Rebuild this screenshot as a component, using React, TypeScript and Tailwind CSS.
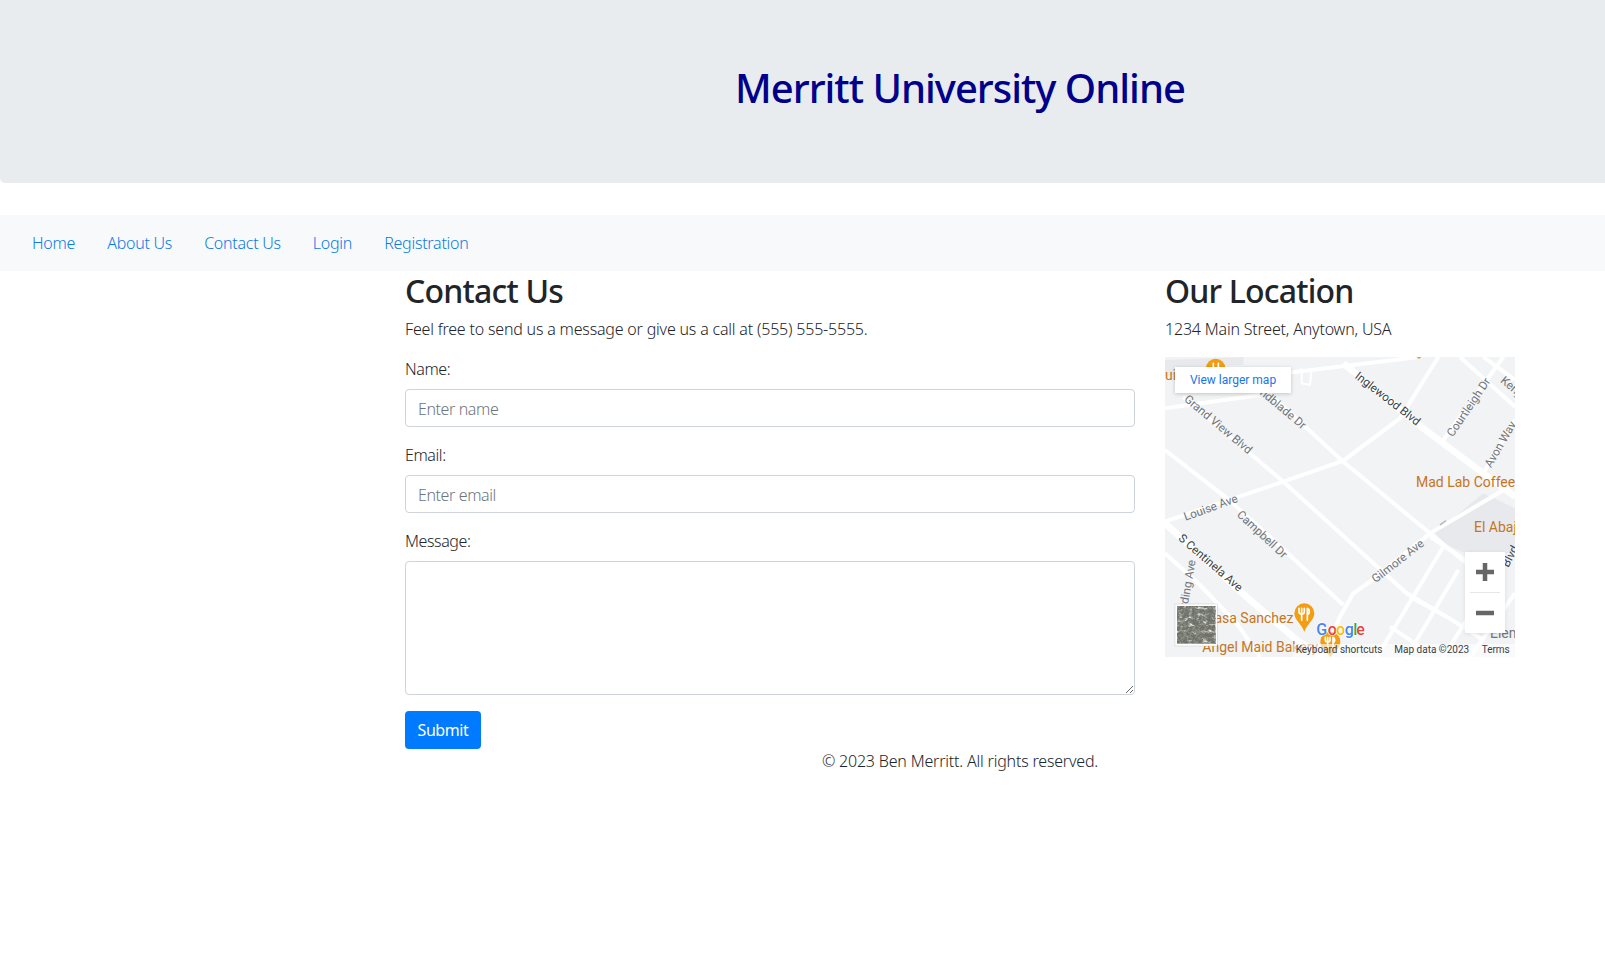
import React from "react";

const sans = "font-['Noto_Sans',sans-serif]";

function MapArt() {
  const minor: string[] = [
    "M45 330 L235 478 L400 628 L580 795",
    "M45 640 L150 735 L260 850 L330 951",
    "M45 205 L330 165",
    "M300 112 L800 52",
    "M300 110 L395 195 L580 365 L840 580 L1005 715",
    "M100 170 L400 425 L770 760 L890 830",
    "M45 545 L400 425 L580 362 L750 235 L865 51",
    "M520 951 L570 830 L610 760 L660 725 L840 580 L1095 430",
    "M680 951 L880 620",
    "M770 951 L925 690",
    "M880 951 L1000 760",
    "M960 951 L1095 760",
    "M780 770 L890 830 L1000 900",
    "M720 860 L840 940",
    "M840 590 L945 660",
    "M930 51 L1095 200 ",
    "M1060 51 L880 300",
    "M1095 240 L1000 400",
    "M1000 51 L1095 120",
  ];
  return (
    <svg viewBox="45 51 1050 900" className="absolute inset-0 h-full w-full">
      <defs>
        <filter id="sat" x="0" y="0" width="100%" height="100%">
          <feTurbulence type="fractalNoise" baseFrequency="0.07 0.1" numOctaves="3" seed="7" />
          <feColorMatrix values="0 0 0 0 0.76  0 0 0 0 0.76  0 0 0 0 0.72  3.5 0 0 0 -1.9" />
        </filter>
        <filter id="sat2" x="0" y="0" width="100%" height="100%">
          <feTurbulence type="fractalNoise" baseFrequency="0.11" numOctaves="3" seed="21" />
          <feColorMatrix values="0 0 0 0 0.26  0 0 0 0 0.28  0 0 0 0 0.25  3.5 0 0 0 -1.5" />
        </filter>
      </defs>
      <rect x="45" y="51" width="1050" height="900" fill="#f1f3f4" />
      <path d="M855 578 L1000 460 L1095 505 L1095 640 L945 640 L880 610 Z" fill="#e8e9ed" />
      <path d="M45 60 L280 51 L280 75 L160 80 L45 110 Z" fill="#e8e9ed" />
      <g fill="none" stroke="#ffffff" strokeWidth="12">
        {minor.map((d) => (
          <path key={d} d={d} />
        ))}
      </g>
      <g fill="none" stroke="#ffffff" strokeWidth="20">
        <path d="M580 70 L800 250 L1000 400 L1095 470" />
        <path d="M45 550 L300 780 L440 900 L520 951" />
      </g>
      <path d="M455 85 L455 130 L480 135 L485 90" fill="none" stroke="#fff" strokeWidth="6" />
      <path d="M870 555 L888 542" stroke="#bdbdbd" strokeWidth="5" fill="none" />

      <g fontFamily="Roboto, sans-serif" fontWeight="400" fontSize="35" fill="#70757a" textAnchor="middle" dominantBaseline="middle">
        <text transform="translate(712 178) rotate(38)" fill="#3c4043">Inglewood Blvd</text>
        <text transform="translate(958 203) rotate(-56)">Courtleigh Dr</text>
        <text transform="translate(1055 118) rotate(40)" textAnchor="start">Kenyon</text>
        <text transform="translate(462 262) rotate(40)" textAnchor="end">Lindblade Dr</text>
        <text transform="translate(203 255) rotate(40)">Grand View Blvd</text>
        <text transform="translate(1015 380) rotate(-60)" textAnchor="start">Avon Way</text>
        <text transform="translate(183 505) rotate(-20)">Louise Ave</text>
        <text transform="translate(335 585) rotate(43)">Campbell Dr</text>
        <text transform="translate(745 665) rotate(-38)">Gilmore Ave</text>
        <text transform="translate(180 670) rotate(41)" fill="#3c4043">S Centinela Ave</text>
        <text transform="translate(128 660) rotate(-80)" textAnchor="end">Harding Ave</text>
        <text transform="translate(1082 650) rotate(-62)" fill="#3c4043">Blvd</text>
      </g>

      <g fontFamily="Roboto, sans-serif" fontWeight="400" fontSize="42" fill="#c5761f">
        <text x="798" y="441">Mad Lab Coffee</text>
        <text x="972" y="576">El Abajeño</text>
        <text x="166" y="849">Casa Sanchez</text>
        <text x="157" y="936">Angel Maid Bakery</text>
        <text x="1020" y="895" fill="#70757a">Elementary</text>
        <text x="45" y="120">uil</text>
      </g>

      <g fill="#f29d12">
        <circle cx="197" cy="85" r="29" />
        <path d="M433 820 a30 30 0 0 1 60 0 c0 22 -22 30 -30 56 c-8 -26 -30 -34 -30 -56 Z" />
        <path d="M511 905 a30 30 0 0 1 60 0 c0 22 -22 30 -30 46 c-8 -16 -30 -24 -30 -46 Z" />
        <path d="M800 51 h14 l-7 6 Z" />
      </g>
      <g fill="none" stroke="#ffffff" strokeWidth="5" strokeLinecap="round">
        <path d="M455 805 v36 M447 805 v11 a8 6 0 0 0 16 0 v-11" />
        <path d="M472 805 v36 M472 805 c8 3 8 16 0 20" />
        <path d="M533 892 v30 M526 892 v9 a7 5 0 0 0 14 0 v-9" />
        <path d="M549 892 v30 M549 892 c7 3 7 14 0 17" />
        <path d="M190 70 v22 M205 70 v22" />
      </g>

      <g fontFamily="Roboto, sans-serif" fontWeight="500" fontSize="48" stroke="#ffffff" strokeWidth="4" style={{ paintOrder: "stroke" }}>
        <text x="499" y="886" fill="#4285f4">G</text>
        <text x="533" y="886" fill="#ea4335">o</text>
        <text x="558" y="886" fill="#fbbc05">o</text>
        <text x="584" y="886" fill="#4285f4">g</text>
        <text x="610" y="886" fill="#34a853">l</text>
        <text x="619" y="886" fill="#ea4335">e</text>
      </g>

      <rect x="430" y="912" width="665" height="39" fill="#ffffff" fillOpacity="0.6" />
      <g fontFamily="Roboto, sans-serif" fontWeight="400" fontSize="30" fill="#3c4043">
        <text x="437" y="940">Keyboard shortcuts</text>
        <text x="733" y="940">Map data ©2023</text>
        <text x="995" y="940">Terms</text>
      </g>

      <rect x="75" y="792" width="127" height="126" fill="#ffffff" stroke="#000" strokeOpacity="0.15" strokeWidth="2" />
      <rect x="81" y="798" width="115" height="113" fill="#6f7068" />
      <rect x="81" y="798" width="115" height="113" filter="url(#sat2)" />
      <rect x="81" y="798" width="115" height="113" filter="url(#sat)" />
    </svg>
  );
}

const field =
  "block h-[38px] w-full rounded border border-[#ced4da] bg-white px-3 pt-[7px] pb-[5px] text-[#495057] tracking-[-0.025em] font-light placeholder:text-[#6c757d]";
const heading = "mb-2 pt-[2px] text-[32px] font-medium leading-[36.4px] tracking-[-0.025em]";
const copy = "tracking-[-0.012em]";

export default function App() {
  return (
    <div className={`min-h-[970px] bg-white text-[16px] font-light leading-6 tracking-[-0.025em] text-[#212529] ${sans}`}>
      <header className="mb-8 flex h-[183px] items-start justify-center rounded-bl-[5px] bg-[#e9ecef] pl-[315px] pt-16">
        <h1 className="text-[40px] font-medium leading-[48px] tracking-[-0.025em] text-[#00008b]">Merritt University Online</h1>
      </header>

      <nav className="flex h-14 items-center bg-[#f8f9fa] px-4">
        {["Home", "About Us", "Contact Us", "Login", "Registration"].map((t) => (
          <a key={t} href="#" className="px-4 tracking-[-0.25px] text-[#0b7ae6]">
            {t}
          </a>
        ))}
      </nav>

      <main className="ml-[390px] flex w-[1140px]">
        <section className="w-[760px] px-[15px]">
          <h2 className={heading}>Contact Us</h2>
          <p className={`mb-4 ${copy}`}>Feel free to send us a message or give us a call at (555) 555-5555.</p>
          <form>
            <div className="mb-4">
              <label className="mb-2 block">Name:</label>
              <input placeholder="Enter name" className={field} />
            </div>
            <div className="mb-4">
              <label className="mb-2 block">Email:</label>
              <input placeholder="Enter email" className={field} />
            </div>
            <div className="mb-4">
              <label className="mb-2 block">Message:</label>
              <textarea className="block h-[134px] w-full rounded border border-[#ced4da] bg-white px-3 py-1.5" />
            </div>
            <button type="button" className="block h-[38px] w-[76px] rounded bg-[#007bff] font-normal text-white">
              Submit
            </button>
          </form>
        </section>

        <aside className="w-[380px] px-[15px]">
          <h2 className={heading}>Our Location</h2>
          <p className={`mb-4 ${copy}`}>1234 Main Street, Anytown, USA</p>
          <div className="relative h-[300px] w-[350px] overflow-hidden tracking-normal">
            <MapArt />
            <a
              href="#"
              className="absolute left-[10px] top-[10px] flex h-[26px] w-[116px] items-center justify-center bg-white font-['Roboto',sans-serif] text-[12px] font-normal text-[#1a73e8] shadow-[0_1px_4px_rgba(0,0,0,0.2)]"
            >
              View larger map
            </a>
            <div className="absolute left-[300px] top-[195px] flex h-[81px] w-10 flex-col items-center bg-white shadow-[0_1px_4px_rgba(0,0,0,0.1)]">
              <svg viewBox="0 0 40 40" className="h-10 w-10">
                <path d="M20 11 V29 M11 20 H29" stroke="#666666" strokeWidth="4.5" fill="none" />
              </svg>
              <div className="h-px w-[30px] bg-[#e6e6e6]" />
              <svg viewBox="0 0 40 40" className="h-10 w-10">
                <path d="M11 20 H29" stroke="#666666" strokeWidth="4.5" fill="none" />
              </svg>
            </div>
          </div>
        </aside>
      </main>

      <footer className={`ml-[390px] w-[1140px] text-center ${copy}`}>© 2023 Ben Merritt. All rights reserved.</footer>
    </div>
  );
}
